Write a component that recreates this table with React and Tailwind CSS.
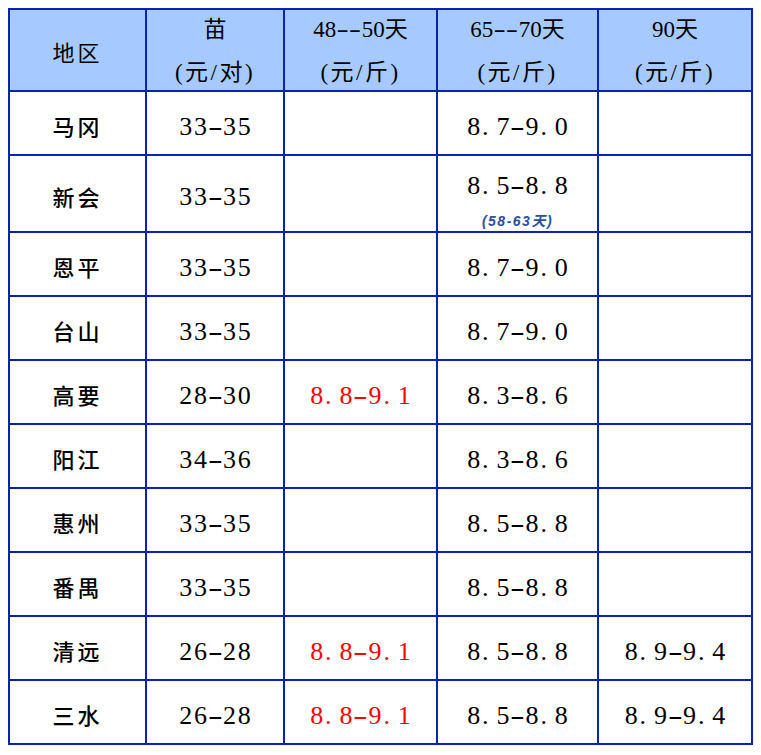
import React from "react";

const rows = [
  ["马冈", "33-35", "", "8.7-9.0", ""],
  ["新会", "33-35", "", "8.5-8.8", ""],
  ["恩平", "33-35", "", "8.7-9.0", ""],
  ["台山", "33-35", "", "8.7-9.0", ""],
  ["高要", "28-30", "8.8-9.1", "8.3-8.6", ""],
  ["阳江", "34-36", "", "8.3-8.6", ""],
  ["惠州", "33-35", "", "8.5-8.8", ""],
  ["番禺", "33-35", "", "8.5-8.8", ""],
  ["清远", "26-28", "8.8-9.1", "8.5-8.8", "8.9-9.4"],
  ["三水", "26-28", "8.8-9.1", "8.5-8.8", "8.9-9.4"],
];

function Num({ t, red }) {
  return (
    <span
      className={
        "inline-flex font-[family-name:'Liberation_Serif','Noto_Sans_CJK_SC',serif] text-[26px] leading-none " +
        (red ? "text-[#ff0000]" : "text-black")
      }
    >
      {t.split("").map((c, i) => (
        <span
          key={i}
          className={
            c === "."
              ? "inline-block w-[14.6px] text-left pl-[1px]"
              : c === "-"
              ? "inline-block w-[14.6px] text-center scale-x-[1.7]"
              : "inline-block w-[14.6px] text-center"
          }
        >
          {c}
        </span>
      ))}
    </span>
  );
}

const head =
  "font-[family-name:'Liberation_Serif','Noto_Sans_CJK_SC',serif] text-[23px] leading-[43px] text-black";

function Days({ a, b }) {
  return (
    <span className="inline-flex items-baseline">
      <span>{a}</span>
      <span className="inline-block mx-[5px] scale-x-[1.6]">--</span>
      <span>{b}</span>
    </span>
  );
}

function HeadCell({ a, b }) {
  return (
    <div className="bg-[#a6caff] flex flex-col items-center justify-center pt-[1px]">
      <div className={head}>{a}</div>
      <div className={head + " tracking-[2.5px]"}>{b}</div>
    </div>
  );
}

export default function App() {
  return (
    <div className="w-[761px] h-[755px] bg-white pt-[8px] pl-[8px]">
      <div className="grid grid-cols-[135px_136px_151px_159px_152px] grid-rows-[80px_62px_75px_62px_62px_62px_62px_62px_62px_62px_62px] gap-[2px] p-[2px] bg-[#0b24ad] w-[745px]">
        <div className="bg-[#a6caff] flex items-center justify-center pt-[3px]">
          <span className="font-[family-name:'Noto_Sans_CJK_SC',sans-serif] text-[22px] tracking-[3px] text-black">
            地区
          </span>
        </div>
        <HeadCell a="苗" b="(元/对)" />
        <HeadCell a={<Days a="48" b="50天" />} b="(元/斤)" />
        <HeadCell a={<Days a="65" b="70天" />} b="(元/斤)" />
        <HeadCell a="90天" b="(元/斤)" />
        {rows.map((r, ri) => (
          <React.Fragment key={ri}>
            <div className="bg-white flex items-center justify-center pt-[4px]">
              <span className="font-[family-name:'Noto_Sans_CJK_SC',sans-serif] text-[22px] leading-none tracking-[3px] font-medium text-black">
                {r[0]}
              </span>
            </div>
            <div className="bg-white flex items-center justify-center pt-[7px]">
              <Num t={r[1]} />
            </div>
            <div className="bg-white flex items-center justify-center pt-[7px]">
              {r[2] && <Num t={r[2]} red />}
            </div>
            {ri === 1 ? (
              <div className="bg-white flex flex-col items-center pt-[17px]">
                <Num t={r[3]} />
                <span className="mt-[15px] font-[family-name:'Liberation_Sans','Noto_Sans_CJK_SC',sans-serif] italic font-bold tracking-[1.5px] text-[14px] leading-none text-[#2f4f9f]">
                  (58-63天)
                </span>
              </div>
            ) : (
              <div className="bg-white flex items-center justify-center pt-[7px]">
                <Num t={r[3]} />
              </div>
            )}
            <div className="bg-white flex items-center justify-center pt-[7px]">
              {r[4] && <Num t={r[4]} />}
            </div>
          </React.Fragment>
        ))}
      </div>
    </div>
  );
}
